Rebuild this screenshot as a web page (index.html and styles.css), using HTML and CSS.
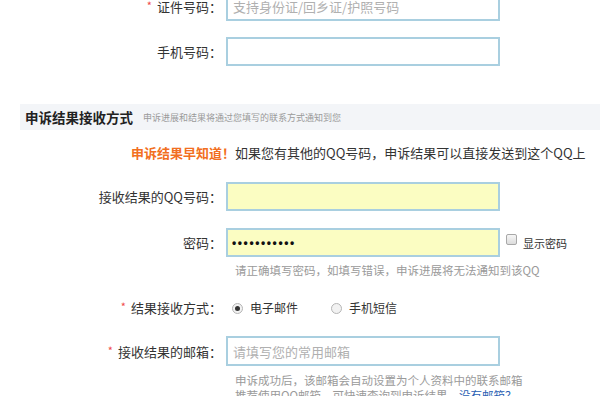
FILE: index.html
```html
<!DOCTYPE html>
<html lang="zh-CN">
<head>
<meta charset="utf-8">
<title>申诉</title>
<link rel="stylesheet" href="styles.css">
</head>
<body>
<div class="page">
  <div class="row row-id">
    <label class="lbl"><span class="req">*</span>证件号码：</label>
    <input class="field" type="text" placeholder="支持身份证/回乡证/护照号码">
  </div>
  <div class="row row-phone">
    <label class="lbl">手机号码：</label>
    <input class="field" type="text">
  </div>

  <div class="section">
    <span class="sec-title">申诉结果接收方式</span>
    <span class="sec-sub">申诉进展和结果将通过您填写的联系方式通知到您</span>
  </div>

  <p class="notice"><span class="hl">申诉结果早知道！</span>如果您有其他的QQ号码，申诉结果可以直接发送到这个QQ上</p>

  <div class="row row-qq">
    <label class="lbl">接收结果的QQ号码：</label>
    <input class="field yellow" type="text">
  </div>
  <div class="row row-pwd">
    <label class="lbl">密码：</label>
    <input class="field yellow pwd" type="text" value="•••••••••••" readonly>
    <span class="show"><span class="chk"></span>显示密码</span>
  </div>
  <p class="hint hint-pwd">请正确填写密码，如填写错误，申诉进展将无法通知到该QQ</p>

  <div class="row row-radio">
    <label class="lbl"><span class="req">*</span>结果接收方式：</label>
    <div class="radios">
      <span class="opt"><span class="radio on"></span>电子邮件</span>
      <span class="opt"><span class="radio"></span>手机短信</span>
    </div>
  </div>

  <div class="row row-mail">
    <label class="lbl"><span class="req">*</span>接收结果的邮箱：</label>
    <input class="field" type="text" placeholder="请填写您的常用邮箱">
  </div>
  <div class="hint hint-mail">
    <p>申诉成功后，该邮箱会自动设置为个人资料中的联系邮箱</p>
    <p>推荐使用QQ邮箱，可快速查询到申诉结果。<a class="link" href="#">没有邮箱？</a></p>
  </div>
</div>
</body>
</html>
```
FILE: styles.css
```css
html, body {
  margin: 0;
  padding: 0;
  background: #fff;
  overflow: hidden;
}
body {
  width: 600px;
  height: 396px;
  font-family: "Noto Sans CJK SC", "Noto Sans", sans-serif;
  color: #333;
}
p { margin: 0; }

.row {
  display: grid;
  grid-template-columns: 222px 274px auto;
  column-gap: 4px;
  align-items: center;
}
.lbl {
  text-align: right;
  font-size: 13px;
  color: #333;
  white-space: nowrap;
}
.req {
  color: #f04a4a;
  font-size: 11px;
  margin-right: 5px;
  position: relative;
  top: -2px;
}
.field {
  box-sizing: border-box;
  width: 274px;
  height: 29px;
  margin: 0;
  border: 2px solid #a9cfe0;
  background: #fff;
  padding: 0 5px;
  font-family: "Noto Sans CJK SC", sans-serif;
  font-size: 13px;
  color: #222;
  outline: none;
}
.field::placeholder { color: #b0b0b0; }
.yellow { background: #fbfdc2; }
.pwd {
  font-family: "Liberation Sans", sans-serif;
  font-size: 12px;
  font-weight: bold;
  letter-spacing: 1.6px;
  color: #111;
  padding-left: 4px;
}

.row-id { margin-top: -8px; }
.row-phone { margin-top: 16px; }

.section {
  margin: 38px 0 0 20px;
  height: 26px;
  background: #f3f5f8;
  padding-left: 5px;
  display: flex;
  align-items: center;
  white-space: nowrap;
}
.sec-title {
  font-size: 13.5px;
  font-weight: bold;
  color: #222;
}
.sec-sub {
  font-size: 9px;
  color: #9a9a9a;
  margin-left: 10px;
}

.notice {
  margin-top: 13px;
  line-height: 20px;
  padding-left: 131px;
  font-size: 13px;
  color: #333;
  white-space: nowrap;
}
.hl { color: #f26f21; font-weight: bold; }

.row-qq { margin-top: 19px; }
.row-pwd { margin-top: 17px; }

.show {
  display: flex;
  align-items: center;
  font-size: 11px;
  color: #333;
  margin-left: 2px;
  white-space: nowrap;
}
.chk {
  width: 9px;
  height: 9px;
  border: 1px solid #a8a8a8;
  border-radius: 2px;
  background: linear-gradient(#f6f6f6, #dcdcdc);
  margin-right: 6px;
  position: relative;
  top: -3px;
}

.hint {
  padding-left: 235px;
  font-size: 11.5px;
  color: #9a9a9a;
  white-space: nowrap;
}
.hint-pwd { margin-top: 5px; line-height: 16px; }

.row-radio { margin-top: 20px; line-height: 20px; }
.radios {
  display: flex;
  align-items: center;
  font-size: 12px;
  color: #333;
  padding-left: 6px;
}
.opt { display: flex; align-items: center; }
.opt + .opt { margin-left: 33px; }
.radio {
  box-sizing: border-box;
  width: 11px;
  height: 11px;
  border-radius: 50%;
  border: 1px solid #b5b5b5;
  background: #f2f2f2;
  margin-right: 7px;
  display: flex;
  align-items: center;
  justify-content: center;
}
.radio.on::after {
  content: "";
  width: 5px;
  height: 5px;
  border-radius: 50%;
  background: #333;
}

.row-mail { margin-top: 18px; }
.row-mail .field { height: 30px; }
.hint-mail { margin-top: 7px; line-height: 15px; font-size: 11.5px; }
.link { color: #2b5fb3; text-decoration: none; }
```
